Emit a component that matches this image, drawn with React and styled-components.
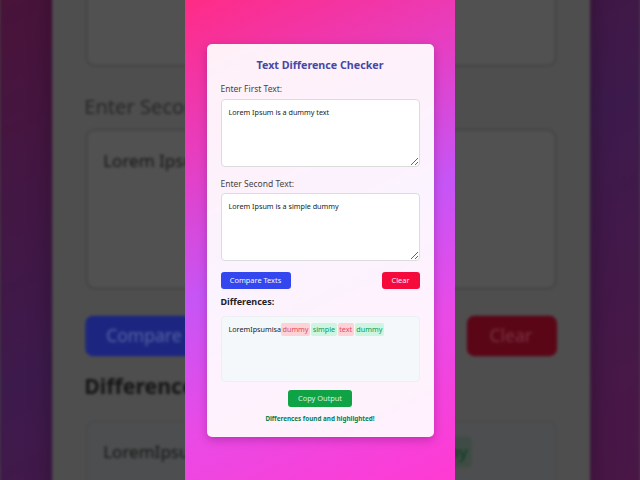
import React from "react";
import styled, { createGlobalStyle, ThemeProvider } from "styled-components";

const bright = {
  gradient: "linear-gradient(155deg, #ff2b86 0%, #e53fc4 28%, #c655f6 50%, #e94ae6 72%, #ff3ad2 100%)",
  card: "rgba(255, 255, 255, 0.93)",
  shadow: "0 3px 10px rgba(80, 0, 80, 0.3)",
  title: "#4548a6",
  label: "#444",
  fieldBg: "#fff",
  fieldBorder: "#dcdcdc",
  resize: "vertical",
  text: "#222",
  compare: "#3447ef",
  compareText: "#f2f4ff",
  clear: "#f40a3b",
  clearText: "#fde8ee",
  outBg: "#f5f8fb",
  outBorder: "#edf0f3",
  removedBg: "#fdd3d7",
  removedText: "#e04a5c",
  addedBg: "#cdf5e0",
  addedText: "#0c9a5b",
  copy: "#10a346",
  copyText: "#d8f3e2",
  status: "#05804f",
};

const dim = {
  gradient: "linear-gradient(155deg, #4f0d2a 0%, #47143d 28%, #3d1a4c 50%, #481747 72%, #4f1241 100%)",
  card: "#4f4e4f",
  shadow: "0 3px 10px rgba(0, 0, 0, 0.3)",
  title: "#181a3a",
  label: "#262626",
  fieldBg: "#515151",
  fieldBorder: "#464646",
  resize: "none",
  text: "#151515",
  compare: "#1c2680",
  compareText: "#5664a4",
  clear: "#5a0616",
  clearText: "#7c3444",
  outBg: "#4d4e4f",
  outBorder: "#494a4b",
  removedBg: "#4f4244",
  removedText: "#46171c",
  addedBg: "#3f4c45",
  addedText: "#0a3a22",
  copy: "#063316",
  copyText: "#3f4b43",
  status: "#03291a",
};

const GlobalStyle = createGlobalStyle`
  html, body { margin: 0; padding: 0; background: #000; overflow: hidden; }
  * { box-sizing: border-box; }
`;

const Stage = styled.div`
  position: relative;
  width: 640px;
  height: 480px;
  overflow: hidden;
  display: flex;
  justify-content: center;
  align-items: center;
  background: #444;
  font-family: "Noto Sans", "Open Sans", sans-serif;
`;

const Backdrop = styled.div`
  position: absolute;
  inset: 0;
  display: flex;
  justify-content: center;
  align-items: center;
  pointer-events: none;
  overflow: hidden;
`;

const Blurred = styled.div`
  transform: scale(2.37);
  filter: blur(0.6px);
`;

const Foreground = styled.div`
  position: relative;
`;

const Phone = styled.div`
  position: relative;
  width: 270px;
  height: 480px;
  flex-shrink: 0;
  display: flex;
  align-items: center;
  justify-content: center;
  background: ${(p) => p.theme.gradient};
`;

const Card = styled.div`
  width: 227px;
  padding: 14px 14px 13.5px;
  background: ${(p) => p.theme.card};
  border-radius: 5px;
  box-shadow: ${(p) => p.theme.shadow};
  display: flex;
  flex-direction: column;
`;

const Title = styled.h1`
  margin: 0;
  font-size: 10.7px;
  line-height: 14px;
  font-weight: 700;
  text-align: center;
  color: ${(p) => p.theme.title};
`;

const Label = styled.label`
  display: block;
  margin: ${(p) => p.$top}px 0 ${(p) => p.$bottom}px;
  font-size: 8.5px;
  line-height: 10px;
  color: ${(p) => p.theme.label};
`;

const TextArea = styled.textarea`
  display: block;
  width: 100%;
  height: 68px;
  margin: 0;
  padding: 7px 7px;
  border: 1px solid ${(p) => p.theme.fieldBorder};
  border-radius: 4px;
  background: ${(p) => p.theme.fieldBg};
  font-family: "Noto Sans", "Open Sans", sans-serif;
  font-size: 7.2px;
  line-height: 10px;
  color: ${(p) => p.theme.text};
  resize: ${(p) => p.theme.resize};
  outline: none;
`;

const ButtonRow = styled.div`
  display: flex;
  justify-content: ${(p) => p.$justify || "space-between"};
  margin-top: ${(p) => p.$top}px;
`;

const Button = styled.button`
  height: 17px;
  width: ${(p) => p.$w}px;
  padding: 0;
  border: none;
  border-radius: 3px;
  background: ${(p) => p.theme[p.$kind]};
  color: ${(p) => p.theme[p.$kind + "Text"]};
  font-family: "Noto Sans", "Open Sans", sans-serif;
  font-size: 7.4px;
  line-height: 17px;
  text-align: center;
  cursor: pointer;
`;

const Heading = styled.h2`
  margin: 7px 0 8px;
  font-size: 9px;
  line-height: 12px;
  font-weight: 700;
  color: ${(p) => p.theme.text};
`;

const Output = styled.div`
  height: 66px;
  padding: 5px 7px;
  border: 1px solid ${(p) => p.theme.outBorder};
  border-radius: 4px;
  background: ${(p) => p.theme.outBg};
  font-size: 7.2px;
  line-height: 14px;
  color: ${(p) => p.theme.text};
`;

const Diff = styled.span`
  display: inline-block;
  padding: 0 1.5px;
  margin-right: 1.2px;
  line-height: 13px;
  border-radius: 2px;
  background: ${(p) => p.theme[p.$kind + "Bg"]};
  color: ${(p) => p.theme[p.$kind + "Text"]};
`;

const Status = styled.p`
  margin: 7.5px 0 0;
  font-size: 6.3px;
  line-height: 9px;
  font-weight: 700;
  text-align: center;
  color: ${(p) => p.theme.status};
`;

function Screen() {
  return (
    <Phone>
      <Card>
        <Title>Text Difference Checker</Title>
        <Label $top={12} $bottom={5}>Enter First Text:</Label>
        <TextArea defaultValue="Lorem Ipsum is a dummy text" />
        <Label $top={12} $bottom={4}>Enter Second Text:</Label>
        <TextArea defaultValue="Lorem Ipsum is a simple dummy" />
        <ButtonRow $top={11}>
          <Button $w={70} $kind="compare">Compare Texts</Button>
          <Button $w={38} $kind="clear">Clear</Button>
        </ButtonRow>
        <Heading>Differences:</Heading>
        <Output>
          LoremIpsumisa<Diff $kind="removed">dummy</Diff>
          <Diff $kind="added">simple</Diff>
          <Diff $kind="removed">text</Diff>
          <Diff $kind="added">dummy</Diff>
        </Output>
        <ButtonRow $top={8} $justify="center">
          <Button $w={64} $kind="copy">Copy Output</Button>
        </ButtonRow>
        <Status>Differences found and highlighted!</Status>
      </Card>
    </Phone>
  );
}

export default function App() {
  return (
    <>
      <GlobalStyle />
      <Stage>
        <Backdrop aria-hidden="true">
          <ThemeProvider theme={dim}>
            <Blurred>
              <Screen />
            </Blurred>
          </ThemeProvider>
        </Backdrop>
        <Foreground>
          <ThemeProvider theme={bright}>
            <Screen />
          </ThemeProvider>
        </Foreground>
      </Stage>
    </>
  );
}
